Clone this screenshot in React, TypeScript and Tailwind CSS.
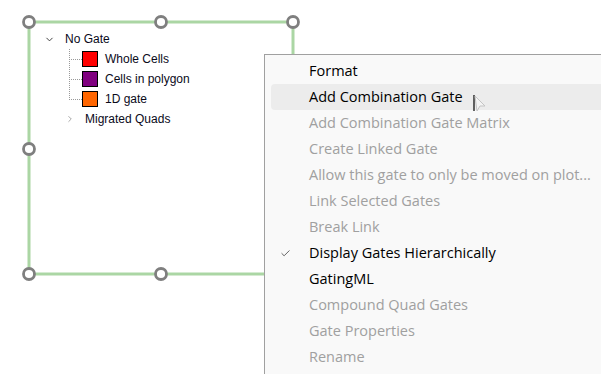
import { Check, ChevronDown, ChevronRight } from 'lucide-react'
import { clsx } from 'clsx'

const GATES = [
  { name: 'Whole Cells', color: 'bg-[#ff0000]' },
  { name: 'Cells in polygon', color: 'bg-[#800080]' },
  { name: '1D gate', color: 'bg-[#ff6600]' },
]

const MENU: { label: string; enabled?: boolean; checked?: boolean; hover?: boolean }[] = [
  { label: 'Format', enabled: true },
  { label: 'Add Combination Gate', enabled: true, hover: true },
  { label: 'Add Combination Gate Matrix' },
  { label: 'Create Linked Gate' },
  { label: 'Allow this gate to only be moved on plot...' },
  { label: 'Link Selected Gates' },
  { label: 'Break Link' },
  { label: 'Display Gates Hierarchically', enabled: true, checked: true },
  { label: 'GatingML', enabled: true },
  { label: 'Compound Quad Gates' },
  { label: 'Gate Properties' },
  { label: 'Rename' },
]

const HANDLES = [
  [29, 22], [161, 22], [293, 22], [29, 149], [29, 274], [161, 274],
]

function GateTree() {
  return (
    <div className="pt-[29px] pl-[44px] text-[12px] leading-[20px] text-[#0a0a1a] [font-family:'Liberation_Sans',Arial,sans-serif]">
      <div className="flex items-center h-[20px]">
        <ChevronDown size={11} strokeWidth={2} className="text-[#333]" />
        <span className="ml-[10px]">No Gate</span>
      </div>
      <div className="relative pl-[38px]">
        <div className="absolute left-[25px] top-0 h-[51px] border-l border-dotted border-[#999]" />
        {GATES.map(g => (
          <div key={g.name} className="relative flex items-center h-[20px]">
            <div className="absolute left-[-13px] top-[10px] w-[13px] border-t border-dotted border-[#999]" />
            <div className={clsx('w-[16px] h-[16px] border border-black', g.color)} />
            <span className="ml-[7px]">{g.name}</span>
          </div>
        ))}
      </div>
      <div className="flex items-center h-[20px] pl-[21px]">
        <ChevronRight size={10} strokeWidth={2} className="text-[#999]" />
        <span className="ml-[10px]">Migrated Quads</span>
      </div>
    </div>
  )
}

function ContextMenu() {
  return (
    <div className="absolute left-[264px] top-[54px] w-[360px] h-[340px] bg-[#f9f9f9] border border-[#a0a0a0] pt-[3px] [font-family:'Open_Sans','Noto_Sans',sans-serif] text-[14.5px]">
      {MENU.map(m => (
        <div
          key={m.label}
          className={clsx(
            'relative flex items-center h-[26px] ml-[6px] rounded-[4px] pl-[38px] whitespace-nowrap',
            m.hover && 'bg-[#ececec]',
            m.enabled ? 'text-black' : 'text-[#a0a0a0]',
          )}
        >
          {m.checked && <Check size={11} strokeWidth={1.5} className="absolute left-[9px] top-[8px] text-[#222]" />}
          {m.label}
          {m.hover && (
            <svg width="14" height="18" viewBox="0 0 14 18" className="absolute left-[202px] top-[11px]">
              <path d="M1 0 V16" stroke="#000" strokeWidth="1.2" />
              <path d="M2 1 L12 11 L7 11 L4 16 Z" fill="#f4f4f4" stroke="#c4c4c4" strokeWidth="1" />
            </svg>
          )}
        </div>
      ))}
    </div>
  )
}

export default function App() {
  return (
    <div className="relative w-[601px] h-[374px] overflow-hidden bg-white">
      <svg width="601" height="374" className="absolute inset-0">
        <rect x="29" y="22" width="264" height="252" fill="none" stroke="#abd6a4" strokeWidth="3" />
        {HANDLES.map(([x, y]) => (
          <circle key={`${x}-${y}`} cx={x} cy={y} r="5.5" fill="#fff" stroke="#7f7f7f" strokeWidth="2.8" />
        ))}
      </svg>
      <div className="relative">
        <GateTree />
      </div>
      <ContextMenu />
    </div>
  )
}
